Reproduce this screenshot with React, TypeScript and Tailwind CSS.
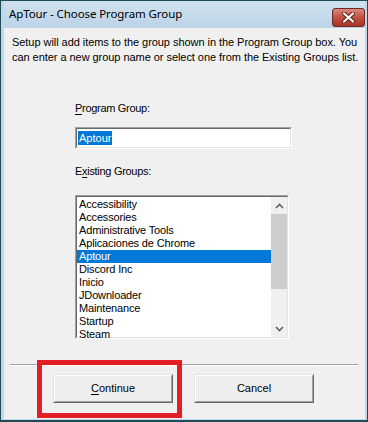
import React from "react";

const groups = [
  "Accessibility",
  "Accessories",
  "Administrative Tools",
  "Aplicaciones de Chrome",
  "Aptour",
  "Discord Inc",
  "Inicio",
  "JDownloader",
  "Maintenance",
  "Startup",
  "Steam",
];

const ui = { fontFamily: '"Liberation Sans", Arial, sans-serif' };

function Chevron({ up }: { up?: boolean }) {
  return (
    <svg width="9" height="6" viewBox="0 0 9 6" className="block">
      <path
        d={up ? "M1 5 L4.5 1.5 L8 5" : "M1 1 L4.5 4.5 L8 1"}
        fill="none"
        stroke="#606060"
        strokeWidth="1.6"
      />
    </svg>
  );
}

function Sunken({ className, children }: { className: string; children: React.ReactNode }) {
  return (
    <div className={`border border-t-[#a0a0a0] border-l-[#a0a0a0] border-b-white border-r-white ${className}`}>
      <div className="h-full w-full border border-t-[#696969] border-l-[#696969] border-b-[#e3e3e3] border-r-[#e3e3e3] bg-white">
        {children}
      </div>
    </div>
  );
}

function Button({ label, accel }: { label: string; accel?: boolean }) {
  return (
    <div className="h-[29px] w-[120px] border border-t-[#e3e3e3] border-l-[#e3e3e3] border-b-[#696969] border-r-[#696969]">
      <div className="flex h-full w-full items-center justify-center border border-t-white border-l-white border-b-[#a0a0a0] border-r-[#a0a0a0] bg-[#eeeeee] text-[11px] text-black">
        {accel ? (
          <span>
            <span className="underline underline-offset-2">{label[0]}</span>
            {label.slice(1)}
          </span>
        ) : (
          label
        )}
      </div>
    </div>
  );
}

export default function App() {
  return (
    <div className="relative h-[422px] w-[368px] bg-[#1f4b59] pt-px pr-px pb-[2px] pl-px" style={ui}>
      <div className="flex h-full flex-col bg-[#c2d7e9] pr-[2px] pb-px pl-[3px]">
        {/* title bar */}
        <div className="flex h-[27px] shrink-0 items-start justify-between bg-gradient-to-b from-[#cfe1ef] to-[#bcd4e7]">
          <span
            className="pt-[4px] pl-[5px] text-[11.5px] leading-[18px] tracking-[-0.1px] text-black"
            style={{ fontFamily: '"Noto Sans", "Open Sans", sans-serif' }}
          >
            ApTour - Choose Program Group
          </span>
          <div className="mt-[7px] flex h-[19px] w-[33px] items-center justify-center rounded-[3px] border border-[#6e2a22] bg-gradient-to-b from-[#d98a7e] via-[#c24f40] to-[#aa3426]">
            <svg width="13" height="11" viewBox="0 0 13 11">
              <path d="M2 1.5 L11 9.5 M11 1.5 L2 9.5" stroke="#5a2018" strokeWidth="4" strokeLinecap="round" />
              <path d="M2 1.5 L11 9.5 M11 1.5 L2 9.5" stroke="#ffffff" strokeWidth="2.2" strokeLinecap="round" />
            </svg>
          </div>
        </div>

        {/* client */}
        <div className="flex flex-1 flex-col bg-[#f0f0f0] text-[11px] text-black">
          <p className="pt-[7px] pl-[8px] leading-[15px] tracking-[-0.05px]">
            Setup will add items to the group shown in the Program Group box. You
            <br />
            can enter a new group name or select one from the Existing Groups list.
          </p>

          <div className="ml-[71px] mt-[37px] leading-[13px] tracking-[-0.3px]">
            <span className="underline underline-offset-2">P</span>rogram Group:
          </div>

          <Sunken className="ml-[71px] mt-[12px] h-[22px] w-[217px]">
            <div className="flex h-full items-center pl-[1px]">
              <span className="bg-[#0078d7] px-px leading-[14px] text-white">Aptour</span>
            </div>
          </Sunken>

          <div className="ml-[71px] mt-[16px] leading-[13px] tracking-[-0.3px]">
            E<span className="underline underline-offset-2">x</span>isting Groups:
          </div>

          <Sunken className="ml-[71px] mt-[17px] h-[144px] w-[214px]">
            <div className="flex h-full">
              <div className="flex-1 pt-px tracking-[-0.15px]">
                {groups.map((g) => (
                  <div
                    key={g}
                    className={`h-[13px] pl-[2px] leading-[13px] ${
                      g === "Aptour" ? "bg-[#0078d7] text-white" : ""
                    }`}
                  >
                    {g}
                  </div>
                ))}
              </div>
              <div className="flex w-[16px] flex-col bg-[#f0f0f0]">
                <div className="flex h-[17px] items-center justify-center">
                  <Chevron up />
                </div>
                <div className="h-[75px] bg-[#cdcdcd]" />
                <div className="flex-1" />
                <div className="flex h-[17px] items-center justify-center">
                  <Chevron />
                </div>
              </div>
            </div>
          </Sunken>

          <div className="ml-[6px] mt-[25px] w-[348px] border-t border-b border-t-[#a0a0a0] border-b-white" />

          <div className="ml-[49px] mt-[8px] flex gap-[21px]">
            <Button label="Continue" accel />
            <Button label="Cancel" />
          </div>
        </div>
      </div>

      {/* annotation */}
      <div className="absolute left-[37px] top-[360px] h-[58px] w-[145px] border-[5px] border-[#e31e24]" />
    </div>
  );
}
